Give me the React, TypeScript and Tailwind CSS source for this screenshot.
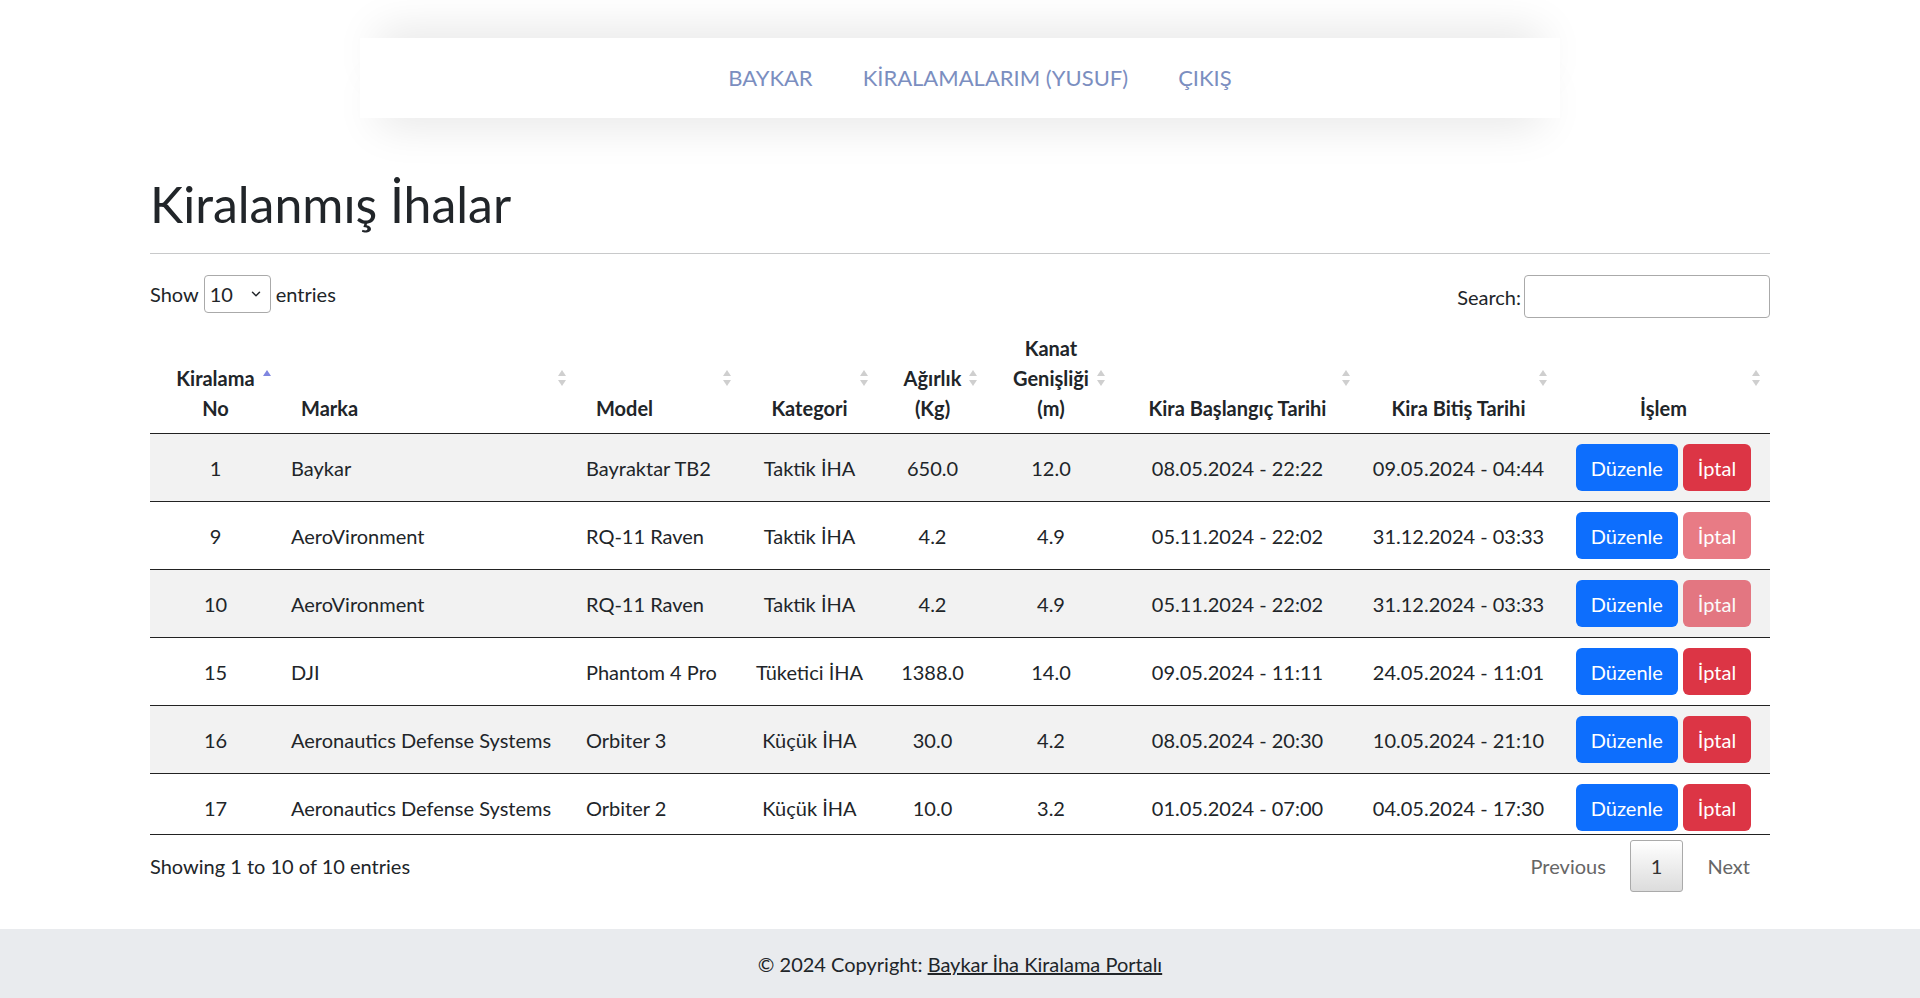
import { ChevronDown } from "lucide-react";

interface Rental {
  no: number;
  marka: string;
  model: string;
  kategori: string;
  agirlik: string;
  kanat: string;
  baslangic: string;
  bitis: string;
  locked: boolean;
}

const rentals: Rental[] = [
  { no: 1, marka: "Baykar", model: "Bayraktar TB2", kategori: "Taktik İHA", agirlik: "650.0", kanat: "12.0", baslangic: "08.05.2024 - 22:22", bitis: "09.05.2024 - 04:44", locked: false },
  { no: 9, marka: "AeroVironment", model: "RQ-11 Raven", kategori: "Taktik İHA", agirlik: "4.2", kanat: "4.9", baslangic: "05.11.2024 - 22:02", bitis: "31.12.2024 - 03:33", locked: true },
  { no: 10, marka: "AeroVironment", model: "RQ-11 Raven", kategori: "Taktik İHA", agirlik: "4.2", kanat: "4.9", baslangic: "05.11.2024 - 22:02", bitis: "31.12.2024 - 03:33", locked: true },
  { no: 15, marka: "DJI", model: "Phantom 4 Pro", kategori: "Tüketici İHA", agirlik: "1388.0", kanat: "14.0", baslangic: "09.05.2024 - 11:11", bitis: "24.05.2024 - 11:01", locked: false },
  { no: 16, marka: "Aeronautics Defense Systems", model: "Orbiter 3", kategori: "Küçük İHA", agirlik: "30.0", kanat: "4.2", baslangic: "08.05.2024 - 20:30", bitis: "10.05.2024 - 21:10", locked: false },
  { no: 17, marka: "Aeronautics Defense Systems", model: "Orbiter 2", kategori: "Küçük İHA", agirlik: "10.0", kanat: "3.2", baslangic: "01.05.2024 - 07:00", bitis: "04.05.2024 - 17:30", locked: false },
];

const Cols = () => (
  <colgroup>
    <col className="w-[131px]" />
    <col className="w-[295px]" />
    <col className="w-[165px]" />
    <col className="w-[137px]" />
    <col className="w-[109px]" />
    <col className="w-[128px]" />
    <col className="w-[245px]" />
    <col className="w-[197px]" />
    <col className="w-[213px]" />
  </colgroup>
);

const SortIcon = ({ active = false }: { active?: boolean }) => (
  <svg
    width="10"
    height="20"
    viewBox="0 0 10 20"
    className="absolute right-[9px] top-1/2 -translate-y-1/2"
  >
    <path d="M5 2 L9 8 L1 8 Z" fill={active ? "#7f86e0" : "#cfcfcf"} />
    {!active && <path d="M5 18 L9 12 L1 12 Z" fill="#cfcfcf" />}
  </svg>
);

const Th = ({
  children,
  left = false,
  active = false,
}: {
  children: React.ReactNode;
  left?: boolean;
  active?: boolean;
}) => (
  <th
    className={
      "relative border-b border-[#222] px-[20px] py-[10px] align-bottom font-bold " +
      (left ? "text-left" : "text-center")
    }
  >
    {children}
    <SortIcon active={active} />
  </th>
);

const App = () => {
  return (
    <div className="min-h-[998px] bg-white font-[family-name:Lato,sans-serif] text-[20px] leading-[30px] text-[#212529]">
      <div className="pt-[38px]">
        <nav className="mx-auto flex h-20 w-[1200px] items-center justify-center gap-[50px] bg-white pl-[40px] text-[22px] text-[#7b8ec0] shadow-[0_-26px_44px_-18px_rgba(0,0,0,0.1),0_26px_44px_-18px_rgba(0,0,0,0.1)]">
          <a href="#">BAYKAR</a>
          <a href="#">KİRALAMALARIM (YUSUF)</a>
          <a href="#">ÇIKIŞ</a>
        </nav>
      </div>

      <main className="mx-auto w-[1620px] pb-[37px]">
        <h1 className="mt-[56px] mb-[19px] text-[50px] font-normal leading-[60px]">
          Kiralanmış İhalar
        </h1>
        <hr className="border-t border-[#c8c9ca]" />

        <div className="mt-[21px] flex items-start justify-between">
          <div className="flex h-[38px] items-center gap-[5px]">
            <span>Show</span>
            <div className="relative">
              <select className="h-[38px] w-[67px] appearance-none rounded-[4px] border border-[#aaa] bg-white pl-[5px] text-[20px] outline-none">
                <option>10</option>
                <option>25</option>
                <option>50</option>
                <option>100</option>
              </select>
              <ChevronDown
                className="pointer-events-none absolute right-[8px] top-1/2 h-[14px] w-[14px] -translate-y-1/2"
                strokeWidth={2.5}
              />
            </div>
            <span>entries</span>
          </div>
          <div className="flex h-[43px] items-center gap-[3px]">
            <span>Search:</span>
            <input
              type="search"
              className="h-[43px] w-[246px] rounded-[4px] border border-[#aaa] px-[5px] outline-none"
            />
          </div>
        </div>

        <table className="mt-[5px] w-full table-fixed border-separate border-spacing-0">
          <Cols />
          <thead>
            <tr>
              <Th active>
                Kiralama
                <br />
                No
              </Th>
              <Th left>Marka</Th>
              <Th left>Model</Th>
              <Th>Kategori</Th>
              <Th>
                Ağırlık
                <br />
                (Kg)
              </Th>
              <Th>
                Kanat
                <br />
                Genişliği
                <br />
                (m)
              </Th>
              <Th>Kira Başlangıç Tarihi</Th>
              <Th>Kira Bitiş Tarihi</Th>
              <Th>İşlem</Th>
            </tr>
          </thead>
        </table>

        <div className="h-[401px] overflow-hidden border-b border-[#222]">
          <table className="w-full table-fixed border-separate border-spacing-0">
            <Cols />
            <tbody>
              {rentals.map((r, i) => (
                <tr key={r.no} className={i % 2 === 0 ? "bg-[#f2f2f2]" : "bg-white"}>
                  <td className="border-b border-[#222] px-[10px] py-[10px] text-center">{r.no}</td>
                  <td className="border-b border-[#222] px-[10px] py-[10px]">{r.marka}</td>
                  <td className="border-b border-[#222] px-[10px] py-[10px]">{r.model}</td>
                  <td className="border-b border-[#222] px-[10px] py-[10px] text-center">{r.kategori}</td>
                  <td className="border-b border-[#222] px-[10px] py-[10px] text-center">{r.agirlik}</td>
                  <td className="border-b border-[#222] px-[10px] py-[10px] text-center">{r.kanat}</td>
                  <td className="border-b border-[#222] px-[10px] py-[10px] text-center">{r.baslangic}</td>
                  <td className="border-b border-[#222] px-[10px] py-[10px] text-center">{r.bitis}</td>
                  <td className="border-b border-[#222] px-[10px] py-[10px] text-center">
                    <div className="flex justify-center gap-[5px]">
                      <button
                        type="button"
                        className="h-[47px] rounded-[6px] bg-[#0d6efd] px-[15px] text-white"
                      >
                        Düzenle
                      </button>
                      <button
                        type="button"
                        disabled={r.locked}
                        className="h-[47px] rounded-[6px] bg-[#dc3545] px-[15px] text-white disabled:opacity-65"
                      >
                        İptal
                      </button>
                    </div>
                  </td>
                </tr>
              ))}
            </tbody>
          </table>
        </div>

        <div className="flex items-center justify-between pt-[5px]">
          <span>Showing 1 to 10 of 10 entries</span>
          <div className="flex items-center gap-[4px] text-[#666]">
            <span className="px-[20px] py-[10px]">Previous</span>
            <span className="rounded-[3px] border border-[#aaa] bg-gradient-to-b from-white to-[#dcdcdc] px-[20px] py-[10px] text-[#333]">
              1
            </span>
            <span className="px-[20px] py-[10px]">Next</span>
          </div>
        </div>
      </main>

      <footer className="bg-[#e9ebee] py-[20px] text-center">
        © 2024 Copyright:{" "}
        <a href="#" className="underline">
          Baykar İha Kiralama Portalı
        </a>
      </footer>
    </div>
  );
};

export default App;
